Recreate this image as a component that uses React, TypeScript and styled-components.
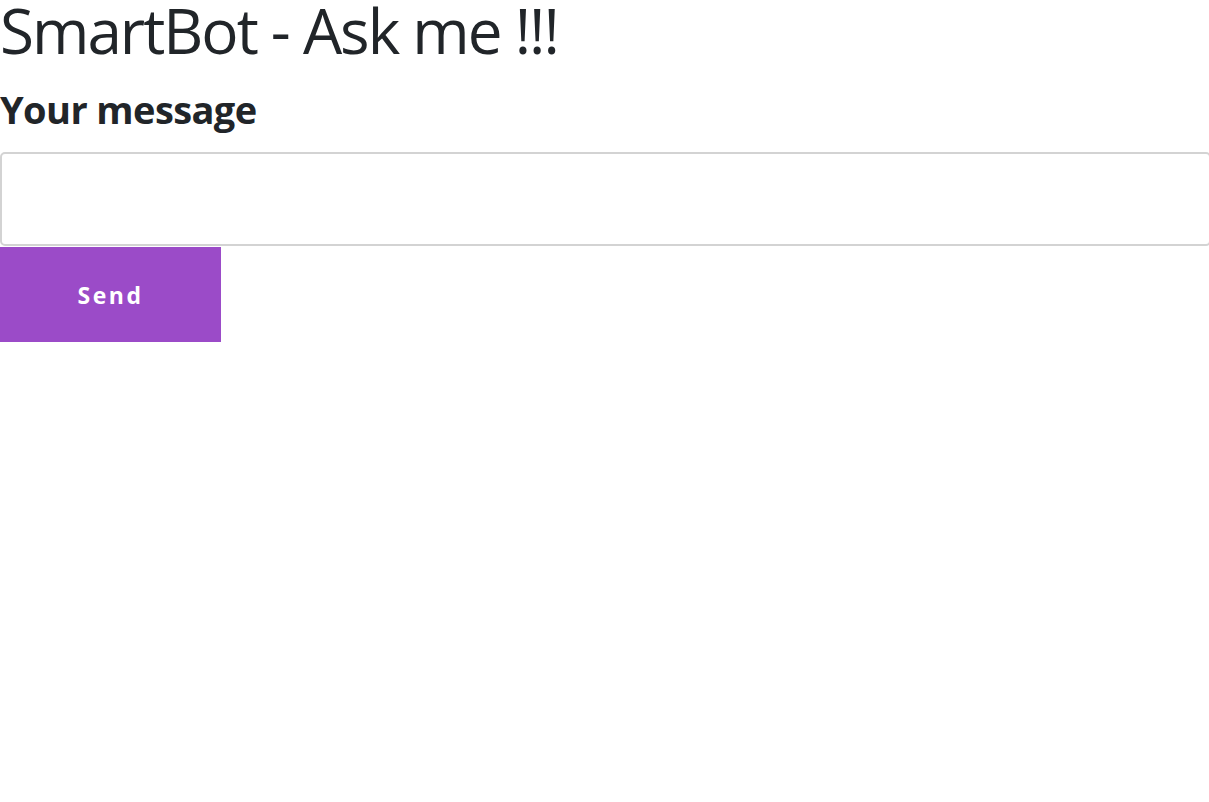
import React from "react";
import styled, { createGlobalStyle } from "styled-components";

const Global = createGlobalStyle`
  html, body { margin: 0; padding: 0; background: #fff; }
  body { font-family: "Open Sans", "Noto Sans", sans-serif; color: #212529; }
  * { box-sizing: border-box; }
`;

const Page = styled.main`
  display: flex;
  flex-direction: column;
  width: 1209px;
`;

const Title = styled.h1`
  margin: 0;
  font-size: 62px;
  font-weight: 400;
  line-height: 60px;
  letter-spacing: -2px;
  white-space: nowrap;
  color: #212529;
`;

const Label = styled.h2`
  margin: 26px 0 0;
  font-size: 38px;
  font-weight: 700;
  line-height: 46px;
  letter-spacing: -0.6px;
  color: #212529;
`;

const Form = styled.form`
  display: flex;
  flex-direction: column;
  align-items: flex-start;
  margin-top: 20px;
`;

const Input = styled.input`
  width: 1211px;
  height: 94px;
  border: 2px solid #d3d3d3;
  border-radius: 5px;
  padding: 0 12px;
  font-size: 20px;
  font-family: inherit;
  outline: none;
`;

const SendButton = styled.button`
  width: 221px;
  height: 95px;
  margin-top: 1px;
  padding: 0;
  border: none;
  background: #9b4bc8;
  color: #fff;
  font-family: inherit;
  font-size: 23px;
  font-weight: 700;
  letter-spacing: 2.5px;
  cursor: pointer;
`;

export default function App() {
  return (
    <Page>
      <Global />
      <Title>SmartBot - Ask me !!!</Title>
      <Label>Your message</Label>
      <Form onSubmit={(e) => e.preventDefault()}>
        <Input type="text" />
        <SendButton type="submit">Send</SendButton>
      </Form>
    </Page>
  );
}
